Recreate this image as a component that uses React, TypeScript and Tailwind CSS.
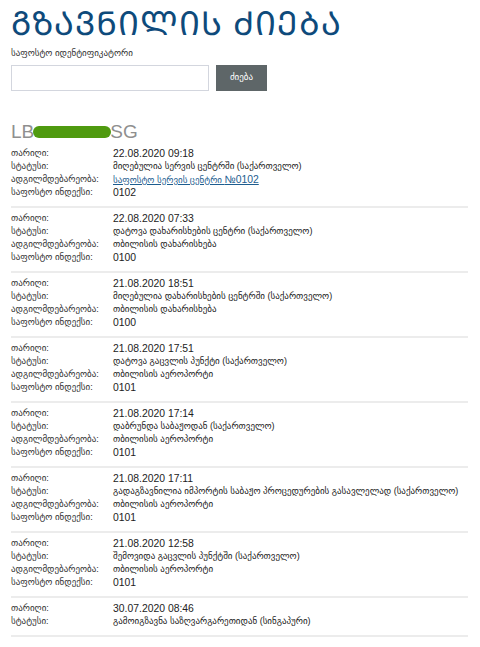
import React from 'react';

type Row = {
  date: string;
  status: string;
  location?: string;
  locationLink?: boolean;
  index?: string;
};

const rows: Row[] = [
  { date: '22.08.2020 09:18', status: 'მიღებულია სერვის ცენტრში (საქართველო)', location: 'საფოსტო სერვის ცენტრი', locationLink: true, index: '0102' },
  { date: '22.08.2020 07:33', status: 'დატოვა დახარისხების ცენტრი (საქართველო)', location: 'თბილისის დახარისხება', index: '0100' },
  { date: '21.08.2020 18:51', status: 'მიღებულია დახარისხების ცენტრში (საქართველო)', location: 'თბილისის დახარისხება', index: '0100' },
  { date: '21.08.2020 17:51', status: 'დატოვა გაცვლის პუნქტი (საქართველო)', location: 'თბილისის აეროპორტი', index: '0101' },
  { date: '21.08.2020 17:14', status: 'დაბრუნდა საბაჟოდან (საქართველო)', location: 'თბილისის აეროპორტი', index: '0101' },
  { date: '21.08.2020 17:11', status: 'გადაგზავნილია იმპორტის საბაჟო პროცედურების გასავლელად (საქართველო)', location: 'თბილისის აეროპორტი', index: '0101' },
  { date: '21.08.2020 12:58', status: 'შემოვიდა გაცვლის პუნქტში (საქართველო)', location: 'თბილისის აეროპორტი', index: '0101' },
  { date: '30.07.2020 08:46', status: 'გამოიგზავნა საზღვარგარეთიდან (სინგაპური)' },
];

// ქართული ტექსტი DejaVu-თი უფრო განიერია, ამიტომ ცალკე ზომა
const Line = ({ label, children, ka }: { label: string; children: React.ReactNode; ka?: boolean }) => (
  <div className="flex h-[13px] items-center">
    <div className="w-[102px] shrink-0 text-[9px] text-[#333]">{label}</div>
    <div className={`whitespace-nowrap text-[#222] ${ka ? 'text-[9px]' : 'text-[10.4px]'}`}>{children}</div>
  </div>
);

export default function App() {
  return (
    <div className="min-h-screen bg-white px-[11px] pt-[4px] font-['Liberation_Sans','DejaVu_Sans',sans-serif]">
      {/* სათაური */}
      <h1 className="text-[33px] leading-[40px] text-[#0e4a7b] tracking-[1px]">ᲒᲖᲐᲕᲜᲘᲚᲘᲡ ᲫᲘᲔᲑᲐ</h1>

      {/* ძიების ფორმა */}
      <div className="mt-[2px] text-[9px] leading-[14px] text-[#333]">საფოსტო იდენტიფიკატორი</div>
      <div className="mt-[5px] flex gap-[7px]">
        <input className="h-[26px] w-[198px] border border-[#d3d6de] bg-white px-2 text-[12px] outline-none" />
        <button className="h-[26px] w-[51px] bg-[#5e6668] text-[9px] text-white">ძიება</button>
      </div>

      {/* გზავნილის ნომერი */}
      <div className="mt-[31px] flex items-center text-[19px] leading-[20px] text-[#8f8f8f]">
        <span>LB</span>
        <span className="mx-[-1px] h-[12px] w-[78px] rounded-full bg-[#4f9a0f]" />
        <span>SG</span>
      </div>

      {/* ისტორია */}
      <div className="mt-[1px] w-[457px] leading-[13px]">
        {rows.map((r, i) => (
          <div key={i} className="border-b-2 border-[#ececec] pt-[4px] pb-[7px]">
            <Line label="თარიღი:">{r.date}</Line>
            <Line label="სტატუსი:" ka>{r.status}</Line>
            {r.location && (
              <Line label="ადგილმდებარეობა:" ka>
                {r.locationLink ? (
                  <a href="#" className="text-[#1d5d8f] underline">
                    {r.location} <span className="text-[10.4px]">№0102</span>
                  </a>
                ) : (
                  r.location
                )}
              </Line>
            )}
            {r.index && <Line label="საფოსტო ინდექსი:">{r.index}</Line>}
          </div>
        ))}
      </div>
    </div>
  );
}
